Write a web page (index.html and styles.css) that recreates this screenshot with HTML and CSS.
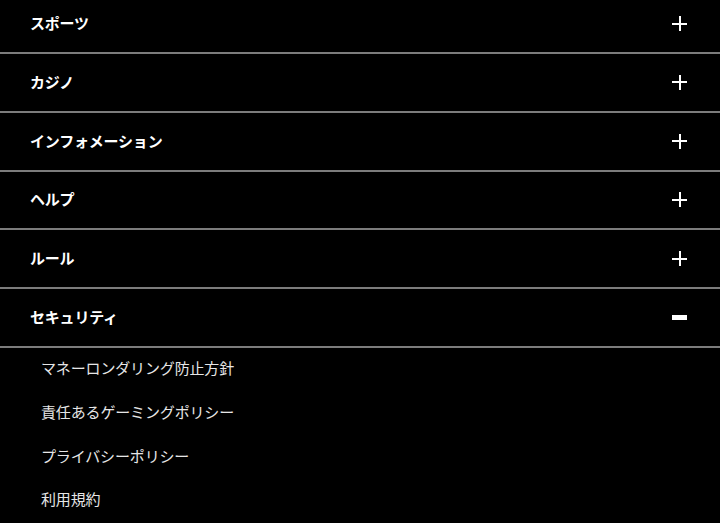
FILE: index.html
```html
<!DOCTYPE html>
<html lang="ja">
<head>
<meta charset="utf-8">
<title>Menu</title>
<link rel="stylesheet" href="styles.css">
</head>
<body>
<nav class="menu">
  <div class="section">
    <div class="head"><span class="title">スポーツ</span><span class="icon plus"></span></div>
  </div>
  <div class="section">
    <div class="head"><span class="title">カジノ</span><span class="icon plus"></span></div>
  </div>
  <div class="section">
    <div class="head"><span class="title">インフォメーション</span><span class="icon plus"></span></div>
  </div>
  <div class="section">
    <div class="head"><span class="title">ヘルプ</span><span class="icon plus"></span></div>
  </div>
  <div class="section">
    <div class="head"><span class="title">ルール</span><span class="icon plus"></span></div>
  </div>
  <div class="section open">
    <div class="head"><span class="title">セキュリティ</span><span class="icon minus"></span></div>
    <ul class="sub">
      <li>マネーロンダリング防止方針</li>
      <li>責任あるゲーミングポリシー</li>
      <li>プライバシーポリシー</li>
      <li>利用規約</li>
    </ul>
  </div>
</nav>
</body>
</html>
```
FILE: styles.css
```css
html, body {
  margin: 0;
  padding: 0;
  background: #000;
}
body {
  font-family: "Noto Sans CJK JP", "Noto Sans", sans-serif;
  color: #fff;
  overflow: hidden;
}
.menu {
  margin-top: -4.8px;
  display: flex;
  flex-direction: column;
}
.head {
  height: 56.8px;
  box-sizing: content-box;
  border-bottom: 2px solid #7c7c7c;
  display: flex;
  align-items: center;
  justify-content: space-between;
  padding: 0 33px 0 30px;
}
.title {
  font-size: 15px;
  font-weight: 700;
  line-height: 1;
  letter-spacing: -0.2px;
  padding-bottom: 2px;
}
.icon {
  position: relative;
  width: 15px;
  height: 15px;
  display: block;
}
.icon::before,
.icon::after {
  content: "";
  position: absolute;
  background: #fff;
}
.plus::before {
  left: 0;
  right: 0;
  top: 6.5px;
  height: 2px;
}
.plus::after {
  top: 0;
  bottom: 0;
  left: 6.5px;
  width: 2px;
}
.minus::before {
  left: 0;
  right: 0;
  top: 5px;
  height: 5px;
}
.minus::after {
  display: none;
}
.sub {
  list-style: none;
  margin: 0;
  padding: 0;
}
.sub li {
  height: 40px;
  line-height: 40px;
  padding: 0 0 3.8px 41px;
  font-size: 15px;
  color: #e6e6e6;
  letter-spacing: -0.15px;
}
```
